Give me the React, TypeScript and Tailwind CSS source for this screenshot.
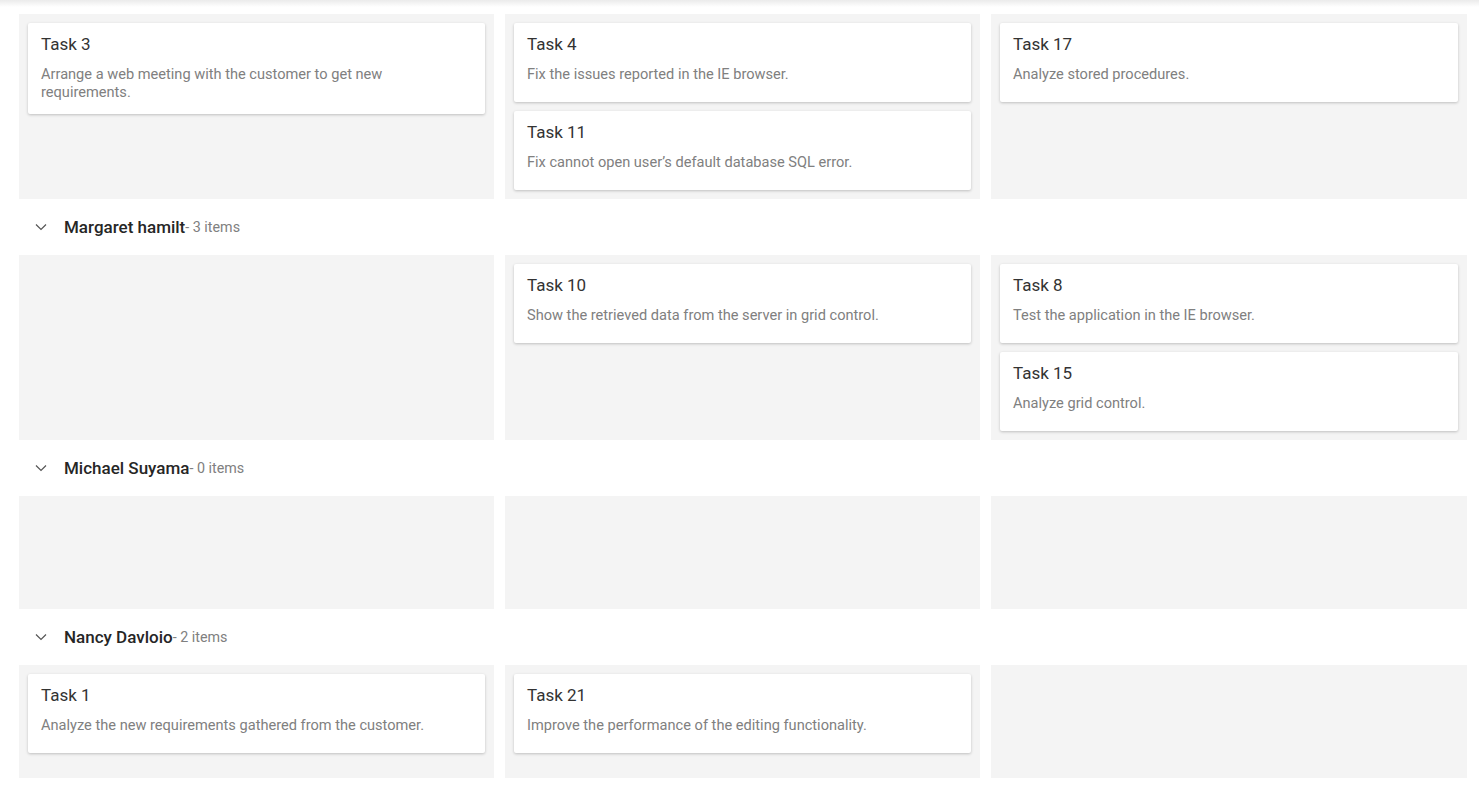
import { ReactNode } from "react";

type Task = { title: string; text: string };

const firstRow: Task[][] = [
  [{ title: "Task 3", text: "Arrange a web meeting with the customer to get new requirements." }],
  [
    { title: "Task 4", text: "Fix the issues reported in the IE browser." },
    { title: "Task 11", text: "Fix cannot open user’s default database SQL error." },
  ],
  [{ title: "Task 17", text: "Analyze stored procedures." }],
];

const groups: { name: string; count: number; cols: Task[][] }[] = [
  {
    name: "Margaret hamilt",
    count: 3,
    cols: [
      [],
      [{ title: "Task 10", text: "Show the retrieved data from the server in grid control." }],
      [
        { title: "Task 8", text: "Test the application in the IE browser." },
        { title: "Task 15", text: "Analyze grid control." },
      ],
    ],
  },
  { name: "Michael Suyama", count: 0, cols: [[], [], []] },
  {
    name: "Nancy Davloio",
    count: 2,
    cols: [
      [{ title: "Task 1", text: "Analyze the new requirements gathered from the customer." }],
      [{ title: "Task 21", text: "Improve the performance of the editing functionality." }],
      [],
    ],
  },
];

function Card({ task }: { task: Task }) {
  return (
    <div className="bg-white rounded-[2px] shadow-[0_1px_3px_rgba(0,0,0,0.22)] px-[13px] pt-[11px]">
      <div className="text-[17px] leading-[20px] text-[#333333]">{task.title}</div>
      <div className="mt-[11px] pb-[13px] min-h-[37px] text-[14.6px] leading-[18px] text-[#808080] pr-[40px]">
        {task.text}
      </div>
    </div>
  );
}

function Row({ cols }: { cols: Task[][] }) {
  return (
    <div className="grid grid-cols-[475px_475px_476px] gap-[11px]">
      {cols.map((tasks, i) => (
        <div key={i} className="bg-[#f4f4f4] p-[9px] min-h-[113px] flex flex-col gap-[9px]">
          {tasks.map((t) => (
            <Card key={t.title} task={t} />
          ))}
        </div>
      ))}
    </div>
  );
}

function GroupHeader({ children, count }: { children: ReactNode; count: number }) {
  return (
    <div className="h-[56px] flex items-center pl-[16px] pt-[2px]">
      <svg width="12" height="8" viewBox="0 0 12 8" className="mr-[17px] -mt-[3px]">
        <path d="M1 1.5 L6 6.5 L11 1.5" fill="none" stroke="#555" strokeWidth="1.2" />
      </svg>
      <span className="text-[17px] font-medium text-[#262626]">{children}</span>
      <span className="text-[14.3px] text-[#808080]">- {count} items</span>
    </div>
  );
}

export default function App() {
  return (
    <div className="w-[1479px] h-[792px] bg-white overflow-hidden font-['Roboto',sans-serif]">
      <div className="h-[14px] bg-gradient-to-b from-[#ebebeb] via-white to-white" />
      <div className="pl-[19px]">
        <Row cols={firstRow} />
        {groups.map((g) => (
          <div key={g.name}>
            <GroupHeader count={g.count}>{g.name}</GroupHeader>
            <Row cols={g.cols} />
          </div>
        ))}
      </div>
    </div>
  );
}
